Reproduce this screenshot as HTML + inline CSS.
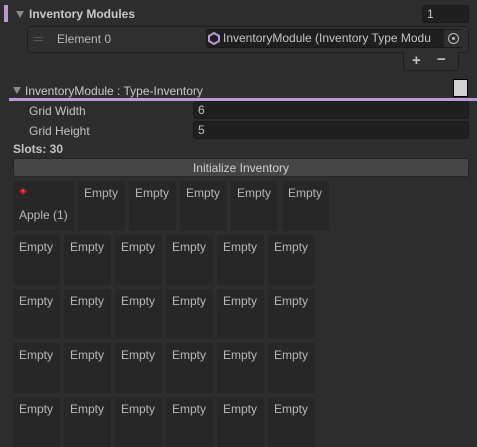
<!DOCTYPE html>
<html><head><style>
*{margin:0;padding:0;box-sizing:border-box}
body{width:477px;height:443px;overflow:hidden;background:#2d2d2d;font-family:"Liberation Sans",sans-serif;font-size:12px;color:#c4c4c4;position:relative}
.a{position:absolute;white-space:nowrap}
.f{position:absolute;background:#1f1f1f;border:1px solid #191919;border-radius:3px}
.s{position:absolute;background:#272727;width:47px;height:50px;padding:5px 0 0 6px;color:#b8b8b8}
.tri{position:absolute;width:0;height:0;border-left:4px solid transparent;border-right:4px solid transparent;border-top:7px solid #8a8a8a}
</style></head><body>
<div class="a" style="left:4px;top:5px;width:4px;height:17px;background:#b99ad2"></div>
<div class="tri" style="left:16px;top:11px"></div>
<div class="a" style="left:29px;top:7px;font-weight:bold;color:#c8c8c8">Inventory Modules</div>
<div class="f" style="left:422px;top:5px;width:47px;height:18px;padding:1px 0 0 4px">1</div>
<div class="a" style="left:27px;top:26px;width:442px;height:27px;background:#2f2f2f;border:1px solid #1f1f1f;border-radius:3px"></div>
<div class="a" style="left:33px;top:37px;width:10px;height:1px;background:#555"></div>
<div class="a" style="left:33px;top:40px;width:10px;height:1px;background:#555"></div>
<div class="a" style="left:57px;top:32px;color:#b8b8b8">Element 0</div>
<div class="f" style="left:206px;top:29px;width:257px;height:19px;padding:1px 0 0 16px;overflow:hidden">InventoryModule (Inventory Type Modu</div>
<svg class="a" style="left:208px;top:32px" width="12" height="13" viewBox="0 0 12 13"><path d="M6 1L11 4V9L6 12L1 9V4Z" fill="none" stroke="#b99ad2" stroke-width="2"/></svg>
<div class="a" style="left:444px;top:30px;width:19px;height:17px;background:#2f2f2f"></div>
<div class="a" style="left:448px;top:33px;width:11px;height:11px;border:1px solid #bbb;border-radius:50%"></div>
<div class="a" style="left:452px;top:37px;width:3px;height:3px;background:#bbb;border-radius:50%"></div>
<div class="a" style="left:403px;top:52px;width:56px;height:19px;background:#2f2f2f;border:1px solid #1f1f1f;border-top:none;border-radius:0 0 3px 3px"></div>
<div class="a" style="left:412px;top:52px;font-size:15px;font-weight:bold">+</div>
<div class="a" style="left:437px;top:51px;font-size:15px;font-weight:bold">−</div>
<div class="tri" style="left:13px;top:87px"></div>
<div class="a" style="left:25px;top:84px;color:#c8c8c8">InventoryModule : Type-Inventory</div>
<div class="a" style="left:453px;top:79px;width:15px;height:18px;background:#d2d2d2;border:1px solid #000"></div>
<div class="a" style="left:9px;top:98px;width:468px;height:3px;background:#b99ad2"></div>
<div class="a" style="left:29px;top:104px">Grid Width</div>
<div class="f" style="left:193px;top:101px;width:276px;height:18px;padding:1px 0 0 4px">6</div>
<div class="a" style="left:29px;top:124px">Grid Height</div>
<div class="f" style="left:193px;top:121px;width:276px;height:18px;padding:1px 0 0 4px">5</div>
<div class="a" style="left:13px;top:142px;font-weight:bold">Slots: 30</div>
<div class="a" style="left:13px;top:158px;width:456px;height:19px;background:#464646;border:1px solid #242424;border-radius:3px;text-align:center;padding-top:2px;color:#d0d0d0">Initialize Inventory</div>
<div class="s" style="left:13px;top:181px;width:61px;padding-top:27px">Apple (1)</div>
<svg class="a" style="left:19px;top:188px" width="8" height="7" viewBox="0 0 8 7"><path d="M4 0L8 3L4 7L0 3Z" fill="#c02020"/><path d="M3 2L5 2L4 4Z" fill="#ff8080"/></svg>
<div class="s" style="left:78px;top:181px">Empty</div>
<div class="s" style="left:129px;top:181px">Empty</div>
<div class="s" style="left:180px;top:181px">Empty</div>
<div class="s" style="left:231px;top:181px">Empty</div>
<div class="s" style="left:282px;top:181px">Empty</div>
<div id="g"></div>
<script>
var h='';[235,289,343,397].forEach(function(y){for(var i=0;i<6;i++)h+='<div class="s" style="left:'+(13+51*i)+'px;top:'+y+'px">Empty</div>';});
document.getElementById('g').outerHTML=h;
</script>
</body></html>
